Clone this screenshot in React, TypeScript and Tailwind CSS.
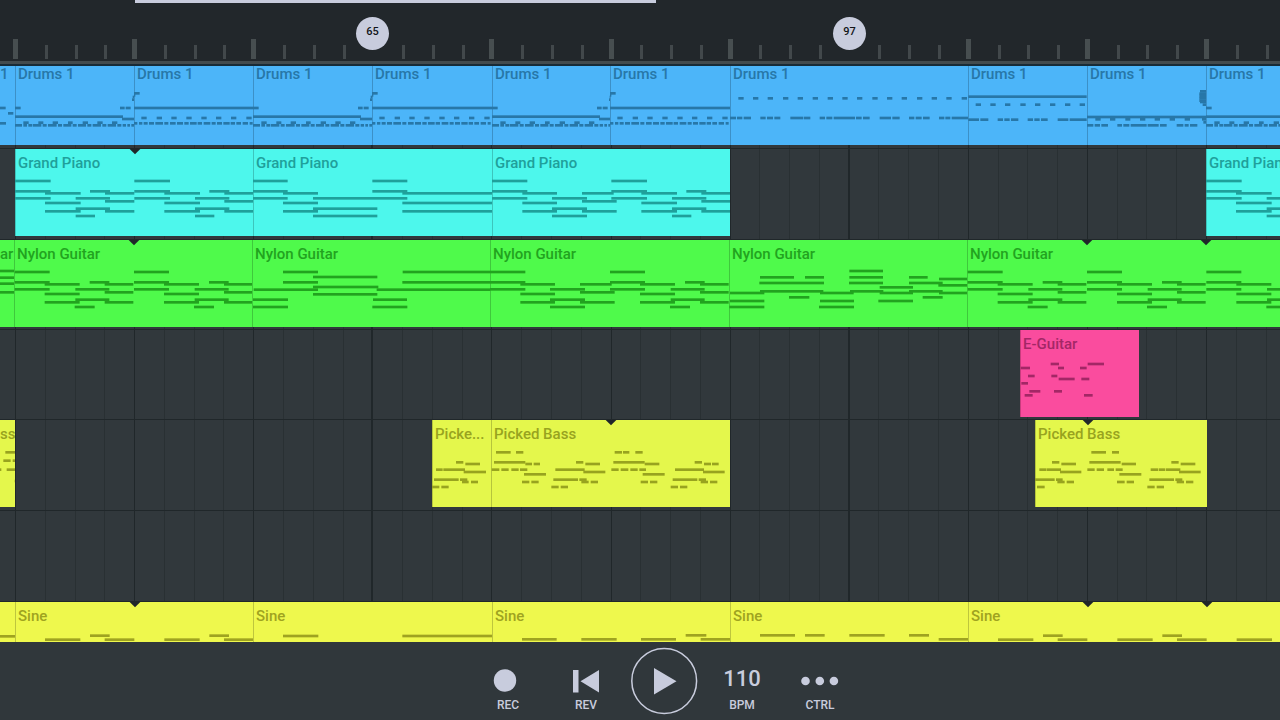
import React from "react";

/* Time is measured in ticks; three ticks make one pixel on screen. */
const TICKS = 3;

type Note = { start: number; end: number; y: number };

/* Parses rows of the form "y: a-b c-d" into notes relative to an origin. */
function phrase(ox: number, oy: number, rows: string): Note[] {
  return rows.split("\n").flatMap((line) => {
    const row = line.trim();
    if (!row) return [];
    const [y, spans] = row.split(":");
    return spans.trim().split(" ").map((span) => {
      const [a, b] = span.split("-");
      return { start: Number(a) - ox, end: Number(b) - ox, y: Number(y) - oy };
    });
  });
}

function chain(...bars: Note[][]): Note[] {
  return bars.flatMap((bar, i) =>
    bar.map((n) => ({ start: n.start + i * 358, end: n.end + i * 358, y: n.y })),
  );
}

const chordA = phrase(0, 0, `
  96: 0-107
  127: 0-107 225-285
  133: 90-197 270-358
  148: 0-107 182-285
  157: 270-358
  162: 90-197
  187: 90-197 270-358
  179: 182-285
  201: 182-240`);

const chordB = phrase(0, 0, `
  96: 0-106
  127: 0-106
  133: 91-195 270-365
  148: 0-106 180-285
  157: 270-374
  162: 91-195
  187: 91-195 270-374
  179: 180-285
  201: 180-285`);

const pianoHold = phrase(0, 0, `
  96: 0-104 358-463
  127: 0-104 358-463
  133: 90-195 448-717
  148: 0-104 180-463
  162: 90-195 448-717
  187: 90-195 448-717
  179: 180-373
  201: 180-373`);

const guitarChordA = phrase(-2, 0, `
  96: 0-105
  127: 0-105 225-284
  133: 90-195 270-356
  148: 0-105 182-284
  157: 270-356
  162: 90-195
  187: 90-195 270-356
  179: 182-284
  201: 180-240`);

const guitarHold = phrase(-3, 0, `
  96: 90-195 449-714
  127: 90-195 448-714
  149: 2-195 371-714
  111: 180-373
  141: 180-376
  163: 180-373
  179: 0-105 360-462
  201: 0-105 358-463`);

const guitarSolo = phrase(27, 30, `
  123: 388-489
  142: 120-222 255-312 388-489 567-623
  159: 118-312 387-489 567-668
  147: 657-741
  166: 655-741
  172: 479-579
  184: 120-310 390-490 567-668
  189: 30-133 300-401 479-579 657-741
  202: 207-268 608-668
  213: 30-133 300-402 475-579
  231: 28-133 297-402`);

const grooveLow = phrase(45, 198, `
  291: 398-404
  299: 396-402
  324: 45-62 360-374 377-392
  350: 45-369
  357: 366-403
  368: 70-86 115-130 158-174 204-218 248-264 292-308 336-352
  376: 45-66 70-81 85-96 98-124 128-140 144-170 174-186 190-214 218-230 234-258 262-274 278-303 307-319 323-348 352-364 368-378 382-390 394-402`);

const grooveHigh = phrase(403, 198, `
  280: 403-420
  286: 403-407
  324: 403-763
  354: 425-441 471-487 515-531 560-576 605-621 649-665 694-710 740-756
  370: 403-413 418-428 432-444 448-463 467-490 494-506 511-528 532-550 554-567 571-591 594-607 612-632 636-648 652-667 671-690 693-706 710-724 729-745 750-759`);

const drumBreak = phrase(899, 198, `
  295: 924-940 968-984 1012-1028 1058-1074 1102-1118 1147-1163 1192-1208 1236-1252 1280-1296 1326-1342 1370-1386 1414-1430 1460-1476 1504-1520 1548-1564 1594-1610
  354: 899-917 920-936 940-962 990-1006 1010-1028 1032-1050 1080-1118 1120-1140 1168-1184 1188-1206 1210-1274 1277-1294 1298-1318 1348-1382 1386-1408 1436-1452 1456-1474 1478-1498 1526-1542 1545-1560 1564-1613`);

const drumFill = phrase(355, 198, `
  290: 356-711
  314: 378-394 422-438 466-482 512-528 556-572 601-617 646-662 690-706
  359: 356-388 392-416 444-460 464-480 484-506 534-550 554-570 574-594 624-656 660-711`);

const drumRoll = phrase(711, 198, `
  274: 1050-1069
  281: 1048-1069
  288: 1048-1069
  295: 1048-1069
  302: 1048-1069
  306: 1050-1069
  314: 1058-1069
  351: 711-1069
  358: 736-752 780-796 826-841 870-886 914-930 959-975 1004-1020 1056-1069
  367: 1060-1069
  376: 711-730 734-750 754-774 802-816 820-838 842-890 893-926 930-950 980-1000 1004-1016 1020-1042`);

const bassPickup = phrase(36, 31, `
  158: 108-130
  163: 136-180
  180: 48-68 70-135
  187: 131-198
  210: 42-116 120-142
  217: 126-146 153-174
  232: 36-58 64-86`);

const bassLine = phrase(213, 31, `
  128: 228-272 288-310 584-606 609-628 646-668
  158: 222-316 468-490 580-674 824-846
  163: 316-336 341-360 496-540 674-718 852-873 876-896
  180: 215-238 244-266 274-296 300-322 406-494 574-596 602-625 631-653 658-678 765-852
  187: 490-556 849-914
  194: 312-378 668-734
  210: 400-474 478-500 758-832 836-858
  217: 306-328 334-356 484-506 512-534 662-684 690-712 842-864 870-892
  232: 394-416 422-444 752-774 780-802`);

const bassOutro = phrase(105, 286, `
  383: 274-318 336-357
  413: 156-178 268-362 514-536
  418: 184-228 365-408 542-586
  435: 118-139 140-183 262-284 290-312 322-342 347-368 452-474 476-496 498-541
  442: 180-244 537-602
  449: 358-424
  465: 105-164 168-188 448-522 526-547
  472: 172-194 200-222 351-374 380-402 530-552 558-580
  487: 111-134 442-464 470-492`);

const leadLick = phrase(60, 15, `
  117: 152-177 263-312
  129: 62-90 174-192 240-260
  153: 84-104 154-172
  162: 176-224 244-268
  175: 64-84
  199: 88-121 162-186
  211: 74-98 252-278`);

const sineBar = phrase(0, 0, `
  101: 225-284
  113: 90-196 269-358`);

const sineHold = phrase(0, 0, `
  102: 90-196 448-717`);

const sineLate = phrase(0, 0, `
  100: 581-643
  112: 90-194 268-374 447-552 626-714`);

const sineSolo = phrase(0, 0, `
  100: 90-195 225-284 358-464 537-597
  112: 626-714`);

type Tone = { fill: string; ink: string };

const blue: Tone = { fill: "bg-[#4cb5f9]", ink: "text-[#2777a8]" };
const cyan: Tone = { fill: "bg-[#4df7ec]", ink: "text-[#1fa09b]" };
const green: Tone = { fill: "bg-[#4ffa4b]", ink: "text-[#22a31f]" };
const pink: Tone = { fill: "bg-[#fa4c9e]", ink: "text-[#a32766]" };
const lime: Tone = { fill: "bg-[#e4f74c]", ink: "text-[#98a31f]" };
const yellow: Tone = { fill: "bg-[#eef84d]", ink: "text-[#9fa320]" };

type Segment = {
  width: number;
  label?: string;
  notes?: Note[];
  markers?: number[];
  cut?: boolean;
  open?: boolean;
};

type Lane = { name: string; size: string; label: string; tone: Tone; segments: Segment[] };

const lanes: Lane[] = [
  {
    name: "Drums",
    size: "h-[82px] pb-[3px]",
    label: "leading-4",
    tone: blue,
    segments: [
      { width: 15, label: "1", cut: true, notes: phrase(0, 198, "324: 0-17\n340: 24-40\n370: 0-18") },
      { width: 119, label: "Drums 1", notes: grooveLow },
      { width: 119, label: "Drums 1", notes: grooveHigh },
      { width: 119, label: "Drums 1", notes: grooveLow },
      { width: 120, label: "Drums 1", notes: grooveHigh },
      { width: 118, label: "Drums 1", notes: grooveLow },
      { width: 120, label: "Drums 1", notes: grooveHigh },
      { width: 238, label: "Drums 1", notes: drumBreak },
      { width: 119, label: "Drums 1", notes: drumFill },
      { width: 119, label: "Drums 1", notes: drumRoll },
      { width: 119, label: "Drums 1", notes: grooveLow, open: true },
    ],
  },
  {
    name: "Grand Piano",
    size: "h-[91px] border-t pb-[3px]",
    label: "pt-1 leading-5",
    tone: cyan,
    segments: [
      { width: 15 },
      { width: 238, label: "Grand Piano", notes: chain(chordA, chordA), markers: [120] },
      { width: 239, label: "Grand Piano", notes: pianoHold },
      { width: 238, label: "Grand Piano", notes: chain(chordB, chordA) },
      { width: 476 },
      { width: 119, label: "Grand Piano", notes: chordA, open: true },
    ],
  },
  {
    name: "Nylon Guitar",
    size: "h-[90px] border-t pb-[2px]",
    label: "pt-1 leading-5",
    tone: green,
    segments: [
      { width: 14, label: "ar", cut: true, notes: phrase(0, 285, "378: 0-44\n398: 0-44\n416: 0-44\n442: 0-44") },
      { width: 238, label: "Nylon Guitar", notes: chain(guitarChordA, guitarChordA), markers: [120] },
      { width: 238, label: "Nylon Guitar", notes: guitarHold },
      { width: 239, label: "Nylon Guitar", notes: chain(chordB, guitarChordA) },
      { width: 238, label: "Nylon Guitar", notes: guitarSolo },
      { width: 357, label: "Nylon Guitar", notes: chain(guitarChordA, guitarChordA, guitarChordA), markers: [120, 239], open: true },
    ],
  },
  {
    name: "E-Guitar",
    size: "h-[90px] border-t pb-[2px]",
    label: "pt-1 leading-5",
    tone: pink,
    segments: [{ width: 1020 }, { width: 119, label: "E-Guitar", notes: leadLick }],
  },
  {
    name: "Picked Bass",
    size: "h-[91px] border-t pb-[3px]",
    label: "pt-1 leading-5",
    tone: lime,
    segments: [
      { width: 15, label: "ss", cut: true, notes: phrase(0, 31, "128: 16-47\n153: 10-32 38-47\n180: 0-4 20-47\n214: 44-47") },
      { width: 417 },
      { width: 59, label: "Picke...", notes: bassPickup },
      { width: 239, label: "Picked Bass", notes: bassLine, markers: [120] },
      { width: 305 },
      { width: 172, label: "Picked Bass", notes: bassOutro, markers: [53] },
    ],
  },
  { name: "Empty", size: "h-[91px] border-t", label: "", tone: lime, segments: [] },
  {
    name: "Sine",
    size: "min-h-[41px] flex-1 border-t",
    label: "pt-1 leading-5",
    tone: yellow,
    segments: [
      { width: 15, cut: true, label: "", notes: phrase(0, 575, "678: 0-45") },
      { width: 238, label: "Sine", notes: chain(sineBar, sineBar), markers: [120] },
      { width: 239, label: "Sine", notes: sineHold },
      { width: 238, label: "Sine", notes: sineLate },
      { width: 238, label: "Sine", notes: sineSolo },
      { width: 357, label: "Sine", notes: chain(sineBar, sineBar, sineBar), markers: [120, 239], open: true },
    ],
  },
];

function Clip({ segment, lane }: { segment: Segment; lane: Lane }) {
  const { tone } = lane;
  return (
    <div
      className={`relative shrink-0 overflow-hidden ${tone.fill} ${tone.ink} ${segment.open ? "grow" : ""}`}
      style={{ width: segment.width }}
    >
      {!segment.cut && <span className="absolute inset-y-0 left-0 w-px bg-black/20" />}
      <svg
        className="absolute left-0 top-0"
        width={segment.width}
        height={87}
        viewBox={`0 0 ${segment.width * TICKS} ${87 * TICKS}`}
        fill="currentColor"
        aria-hidden="true"
      >
        {segment.notes?.map((n, i) => (
          <rect key={i} x={n.start} y={n.y - 4} width={n.end - n.start} height={8} />
        ))}
        {segment.markers?.map((m) => (
          <path key={m} className="fill-[#20262a]" d={`M${m * TICKS - 16} 0h32l-16 16z`} />
        ))}
      </svg>
      <span className={`relative block whitespace-nowrap text-[15px] font-medium ${lane.label} ${segment.cut ? "" : "pl-[3px]"}`}>
        {segment.label}
      </span>
    </div>
  );
}

const BAR = 119.1;

function Ruler() {
  const ticks = Array.from({ length: 120 }, (_, i) => ({ x: Math.round(15 + (i * BAR) / 4), bar: i % 4 === 0 ? i / 4 : -1 }));
  return (
    <header className="relative flex h-[66px] shrink-0 flex-col overflow-hidden bg-[#22272b]">
      <div className="ml-[135px] h-[3px] w-[521px] bg-[#c8ccdd]" />
      <svg className="w-full flex-1" aria-hidden="true">
        {ticks.map(({ x, bar }) =>
          bar < 0 ? (
            <rect key={x} x={x} y={42} width={3} height={14} fill="#42484b" />
          ) : bar % 4 === 3 ? null : (
            <rect key={x} x={x - 2} y={36} width={5} height={20} fill="#474e50" />
          ),
        )}
      </svg>
      <div className="h-[3px] bg-[#434b4e]" />
      <div className="h-[2px] bg-[#182b37]" />
      <Marker at="left-[356px]" bar={65} />
      <Marker at="left-[833px]" bar={97} />
    </header>
  );
}

function Marker({ at, bar }: { at: string; bar: number }) {
  return (
    <span className={`absolute top-[17px] flex size-[33px] items-center justify-center rounded-full bg-[#c8ccdd] pb-[2px] text-[11px] font-medium text-[#111418] ${at}`}>
      {bar}
    </span>
  );
}

function Grid() {
  return (
    <svg className="absolute inset-0 h-full w-full" aria-hidden="true">
      {Array.from({ length: 120 }, (_, i) => {
        const x = Math.round(15 + (i * BAR) / 4);
        const strong = i % 16 === 12;
        const bar = i % 4 === 0;
        return (
          <rect
            key={i}
            x={strong ? x - 1 : x}
            y="0"
            width={strong ? 2 : 1}
            height="100%"
            fill={bar ? "#20272a" : "#293033"}
          />
        );
      })}
    </svg>
  );
}

function Control({ label, children }: { label: string; children: React.ReactNode }) {
  return (
    <button type="button" className="flex h-full w-[78px] flex-col items-center pt-[23px]">
      <span className="flex h-8 items-center justify-center">{children}</span>
      <span className="text-xs font-medium leading-4">{label}</span>
    </button>
  );
}

function Transport() {
  return (
    <footer className="flex h-[78px] shrink-0 items-start justify-center bg-[#30373b] pl-12 text-[#c8ccdd]">
      <Control label="REC">
        <svg width="30" height="26" viewBox="0 0 30 26" fill="currentColor" aria-hidden="true">
          <circle cx="12" cy="12.5" r="11.2" />
        </svg>
      </Control>
      <Control label="REV">
        <svg width="28" height="26" viewBox="0 0 28 26" fill="currentColor" aria-hidden="true">
          <path d="M1 2h5.500v22.500H1zM27 2v22.500L8.500 13.200z" />
        </svg>
      </Control>
      <button type="button" aria-label="Play" className="flex h-full w-[78px] justify-center pt-[5px]">
        <svg className="shrink-0" width="68" height="68" viewBox="0 0 68 68" fill="currentColor" aria-hidden="true">
          <circle cx="34.200" cy="34" r="32.400" fill="none" stroke="currentColor" strokeWidth="1.500" />
          <path d="M24 21v26.500L46.500 34.200z" />
        </svg>
      </button>
      <Control label="BPM">
        <span className="pb-1 text-[22px] font-medium leading-7">110</span>
      </Control>
      <Control label="CTRL">
        <svg width="38" height="26" viewBox="0 0 38 26" fill="currentColor" aria-hidden="true">
          <circle cx="4.500" cy="13" r="4.300" />
          <circle cx="18.800" cy="13" r="4.300" />
          <circle cx="32.900" cy="13" r="4.300" />
        </svg>
      </Control>
    </footer>
  );
}

export default function App() {
  return (
    <div className="flex h-screen flex-col overflow-hidden bg-[#31383c] font-[Roboto,sans-serif]">
      <Ruler />
      <main className="relative flex flex-1 flex-col overflow-hidden">
        <Grid />
        {lanes.map((lane) => (
          <section key={lane.name} aria-label={lane.name} className={`relative flex shrink-0 overflow-hidden border-[#20272a] ${lane.size}`}>
            {lane.segments.map((segment, i) =>
              segment.label === undefined ? (
                <div key={i} className="shrink-0" style={{ width: segment.width }} />
              ) : (
                <Clip key={i} segment={segment} lane={lane} />
              ),
            )}
          </section>
        ))}
      </main>
      <Transport />
    </div>
  );
}
